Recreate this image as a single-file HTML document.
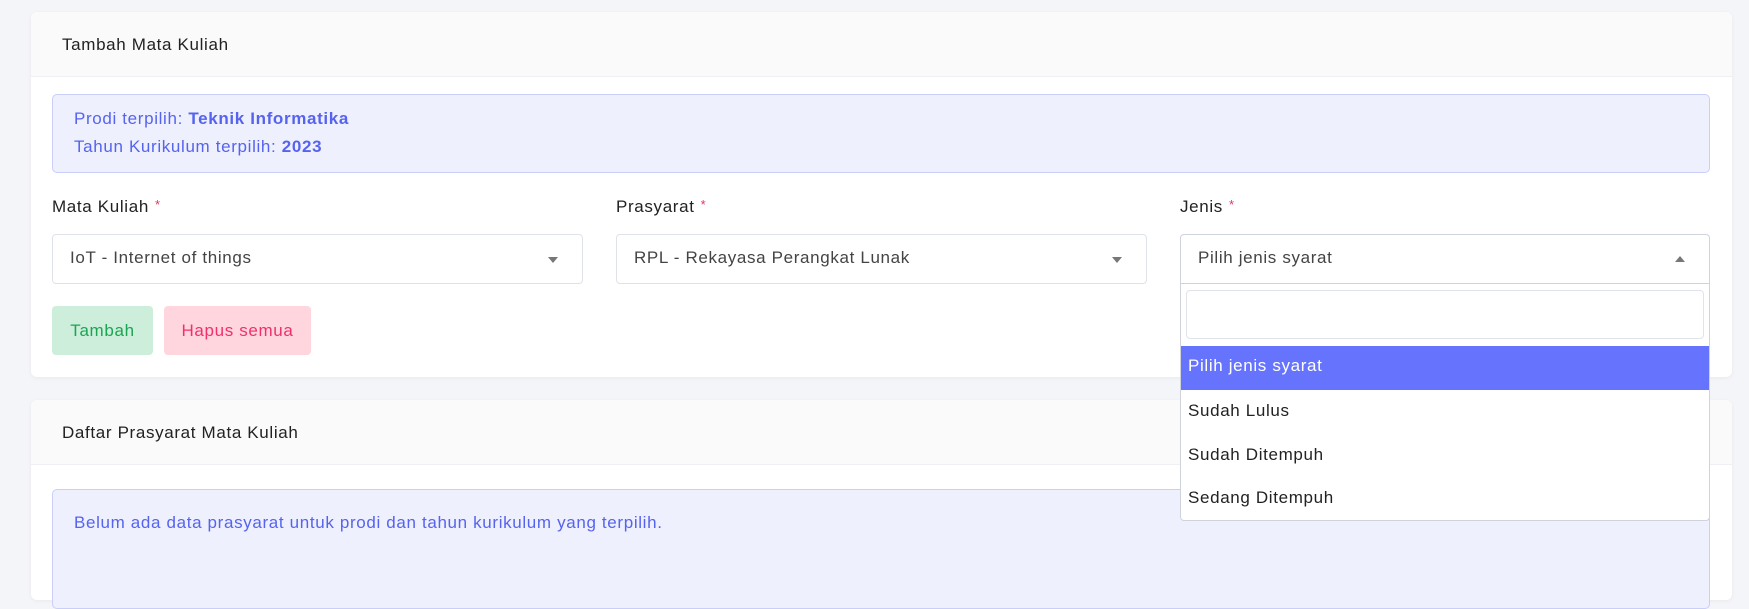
<!DOCTYPE html>
<html><head><style>
*{box-sizing:border-box;margin:0;padding:0}
body{width:1749px;height:537px;overflow:hidden;background:#f4f5f8;font-family:"Liberation Sans",sans-serif;position:relative;color:#333;letter-spacing:0.65px}
.card{position:absolute;left:31px;width:1701px;background:#fff;border-radius:6px;box-shadow:0 1px 4px rgba(0,0,0,.05)}
.hd{height:65px;background:#fafafb;border-bottom:1px solid #eef0f3;border-radius:6px 6px 0 0;padding:0 31px;line-height:65px;font-size:17px;color:#222}
.alert{position:absolute;left:21px;width:1658px;background:#eef0fd;border:1px solid #c9cff8;border-radius:5px;color:#5663ee;font-size:17px}
.lbl{position:absolute;top:197px;font-size:17px;color:#222}
.lbl i{color:#e8335c;font-style:normal;font-size:13px;vertical-align:3px;margin-left:6px}
.sel{position:absolute;top:234px;height:50px;border:1px solid #dfe2e8;border-radius:4px;background:#fff;font-size:17px;color:#444;padding-left:17px;line-height:46px}
.arr{position:absolute;right:24px;top:22px;width:0;height:0;border-left:5px solid transparent;border-right:5px solid transparent;border-top:6px solid #777}
.btn{position:absolute;top:306px;height:49px;border-radius:4px;font-size:17px;line-height:49px;text-align:center}
</style></head><body>
<div class="card" style="top:12px;height:365px">
<div class="hd">Tambah Mata Kuliah</div>
<div class="alert" style="top:82px;height:79px;padding:10px 21px;line-height:28px">Prodi terpilih: <b>Teknik Informatika</b><br>Tahun Kurikulum terpilih: <b>2023</b></div>
</div>
<div class="lbl" style="left:52px">Mata Kuliah<i>*</i></div>
<div class="lbl" style="left:616px">Prasyarat<i>*</i></div>
<div class="lbl" style="left:1180px">Jenis<i>*</i></div>
<div class="sel" style="left:52px;width:531px">IoT - Internet of things<span class="arr"></span></div>
<div class="sel" style="left:616px;width:531px">RPL - Rekayasa Perangkat Lunak<span class="arr"></span></div>
<div class="btn" style="left:52px;width:101px;background:#cdeedb;color:#1ba552">Tambah</div>
<div class="btn" style="left:164px;width:147px;background:#ffd6de;color:#f0306a">Hapus semua</div>
<div class="card" style="top:400px;height:200px">
<div class="hd">Daftar Prasyarat Mata Kuliah</div>
<div class="alert" style="top:89px;height:120px;padding:0 21px;line-height:66px">Belum ada data prasyarat untuk prodi dan tahun kurikulum yang terpilih.</div>
</div>
<div style="position:absolute;left:1180px;top:234px;width:530px;height:287px;border:1px solid #cfd3dc;border-radius:4px;background:#fff">
<div style="height:49px;border-bottom:1px solid #cfd3dc;padding-left:17px;line-height:46px;font-size:17px;color:#444;position:relative">Pilih jenis syarat<span style="position:absolute;right:24px;top:21px;border-left:5px solid transparent;border-right:5px solid transparent;border-bottom:6px solid #777"></span></div>
<div style="margin:6px 5px 0;height:49px;border:1px solid #e0e3ea;border-radius:4px"></div>
<div style="margin-top:7px;height:44px;background:#6673fd;color:#fff;padding-left:7px;line-height:40px;font-size:17px">Pilih jenis syarat</div>
<div style="height:44px;padding-left:7px;line-height:42px;font-size:17px;color:#222">Sudah Lulus</div>
<div style="height:44px;padding-left:7px;line-height:42px;font-size:17px;color:#222">Sudah Ditempuh</div>
<div style="height:44px;padding-left:7px;line-height:40px;font-size:17px;color:#222">Sedang Ditempuh</div>
</div>
</body></html>
